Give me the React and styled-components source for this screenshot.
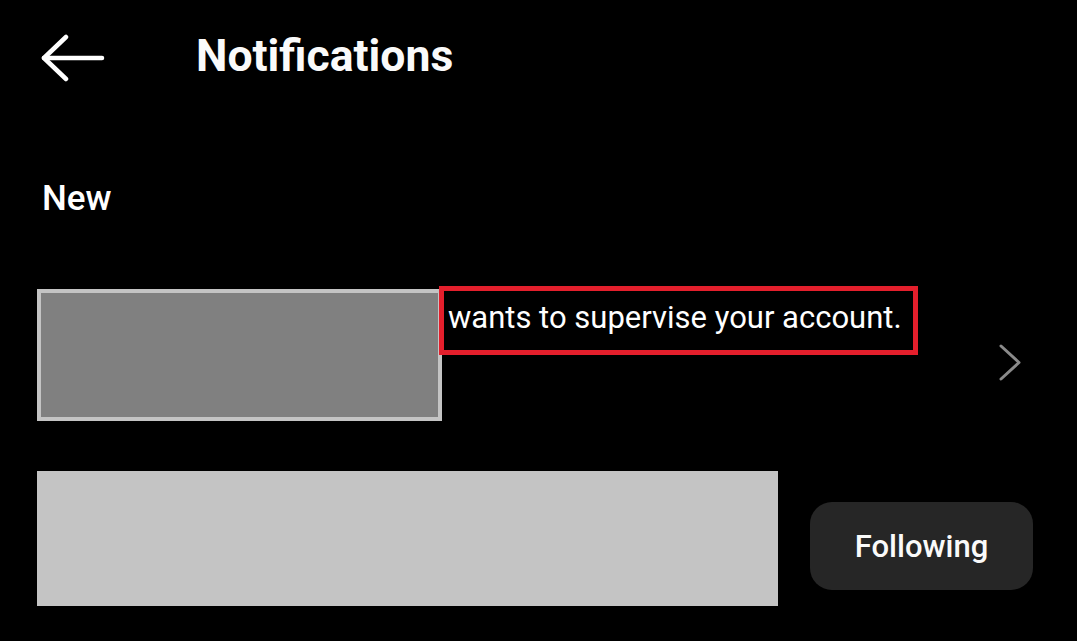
import styled, { createGlobalStyle } from "styled-components";

const GlobalStyle = createGlobalStyle`
  html, body {
    margin: 0;
    padding: 0;
    background: #000;
  }
  body {
    font-family: Roboto, "Liberation Sans", sans-serif;
    color: #fff;
  }
`;

const Page = styled.div`
  width: 1077px;
  height: 641px;
  box-sizing: border-box;
  padding: 0 44px 0 37px;
  background: #000;
  overflow: hidden;
`;

const Header = styled.header`
  height: 116px;
  display: flex;
  align-items: center;
  padding-left: 4px;
`;

const BackButton = styled.button`
  width: 64px;
  height: 50px;
  padding: 0;
  border: 0;
  background: none;
  color: #fff;
  display: flex;
`;

const Title = styled.h1`
  margin: 0 0 5px 91px;
  font-size: 44.5px;
  font-weight: 700;
  line-height: 54px;
  color: #fafafa;
`;

const SectionTitle = styled.h2`
  margin: 65px 0 0 5px;
  font-size: 35px;
  font-weight: 500;
  line-height: 36px;
`;

const Row = styled.div`
  display: flex;
  align-items: flex-start;
  margin-top: ${({ $top }) => $top}px;
`;

const Redacted = styled.div`
  box-sizing: border-box;
  flex: none;
  width: ${({ $w }) => $w}px;
  height: ${({ $h }) => $h}px;
  margin-top: ${({ $offset }) => $offset || 0}px;
  background: ${({ $fill }) => $fill};
  border: ${({ $border }) => ($border ? `4px solid ${$border}` : "none")};
`;

const Highlight = styled.p`
  margin: 0 0 0 -3px;
  border: 5px solid #e41f2c;
  padding: 9px 11px 14px 4px;
  font-size: 31px;
  line-height: 36px;
  font-weight: 400;
  white-space: nowrap;
`;

const Chevron = styled.svg`
  margin: 57px 11px 0 auto;
  flex: none;
`;

const FollowButton = styled.button`
  margin: 31px 0 0 auto;
  width: 223px;
  height: 88px;
  border: 0;
  border-radius: 22px;
  background: #262626;
  color: #fafafa;
  font-family: Roboto, "Liberation Sans", sans-serif;
  font-size: 31px;
  font-weight: 500;
`;

export default function App() {
  return (
    <>
      <GlobalStyle />
      <Page>
        <Header>
          <BackButton aria-label="Back">
            <svg width="64" height="50" viewBox="0 0 64 50" fill="none" stroke="currentColor" strokeWidth="4.5" strokeLinecap="round" strokeLinejoin="round">
              <path d="M3 25 L61 25" />
              <path d="M25 4 L3 25 L25 46" />
            </svg>
          </BackButton>
          <Title>Notifications</Title>
        </Header>

        <SectionTitle>New</SectionTitle>

        <Row $top={69}>
          <Redacted $w={405} $h={132} $offset={3} $fill="#808080" $border="#c4c4c4" />
          <Highlight>wants to supervise your account.</Highlight>
          <Chevron width="24" height="40" viewBox="0 0 24 40" fill="none" stroke="#8a8a8a" strokeWidth="3" strokeLinecap="round" strokeLinejoin="round">
            <path d="M3 3 L21 19.5 L3 36" />
          </Chevron>
        </Row>

        <Row $top={50}>
          <Redacted $w={741} $h={135} $fill="#c4c4c4" />
          <FollowButton>Following</FollowButton>
        </Row>
      </Page>
    </>
  );
}
